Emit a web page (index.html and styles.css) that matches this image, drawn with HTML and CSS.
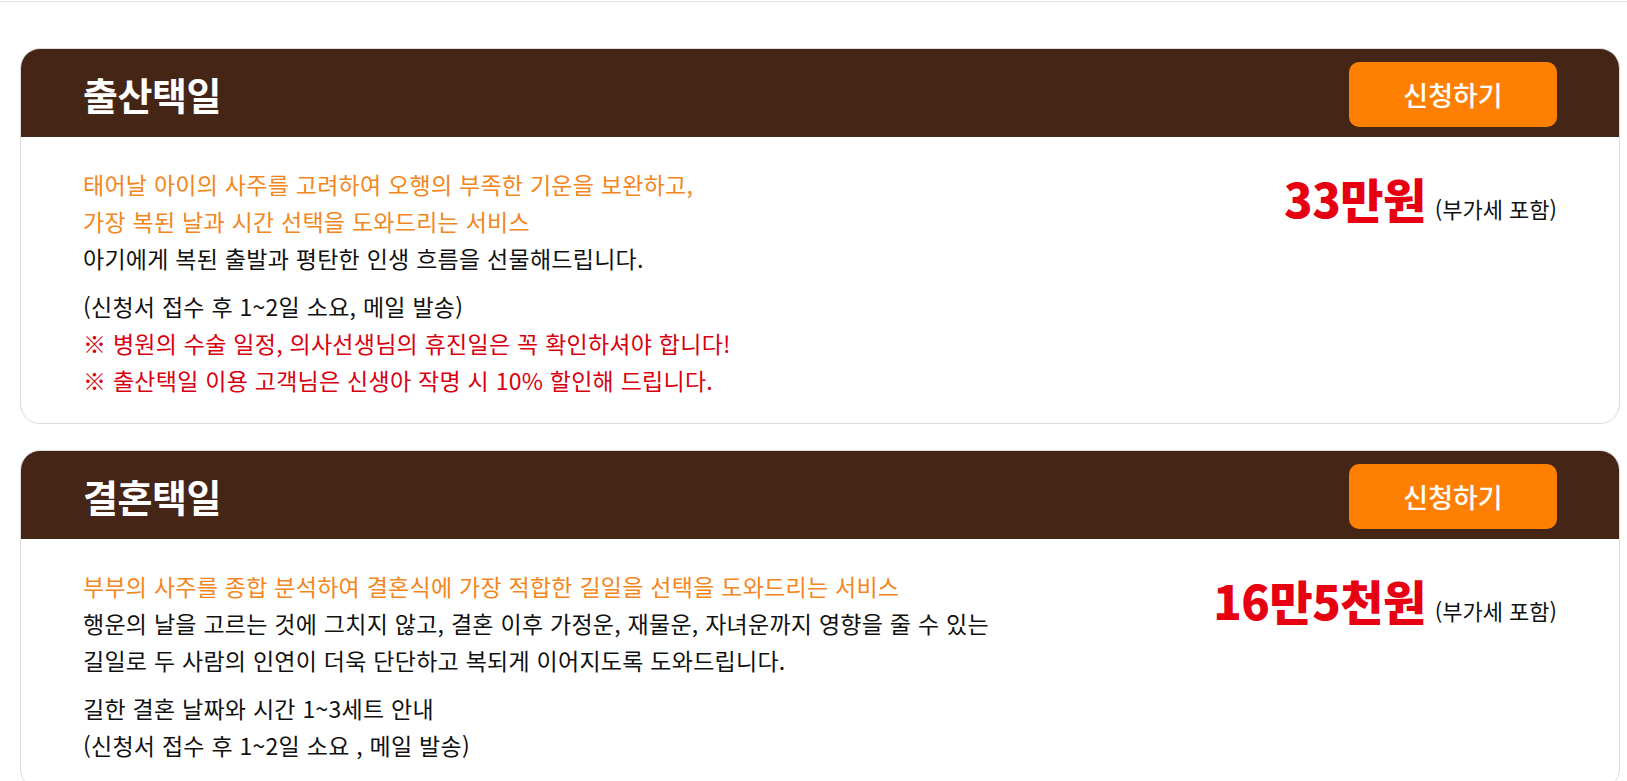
FILE: index.html
```html
<!DOCTYPE html>
<html lang="ko">
<head>
    <meta charset="UTF-8">
    <meta name="viewport" content="width=device-width,user-scalable=no">
    <title>택일 서비스</title>
    <link rel="stylesheet" href="styles.css">
</head>
<body>
    <div class="top-line"></div>
    <section class="wrap">
        <div class="item">
            <div class="item-head">
                <h2>출산택일</h2>
                <a href="javascript:;" class="btn">신청하기</a>
            </div>
            <div class="item-body">
                <div class="desc">
                    <p class="orange">태어날 아이의 사주를 고려하여 오행의 부족한 기운을 보완하고,<br>가장 복된 날과 시간 선택을 도와드리는 서비스</p>
                    <p>아기에게 복된 출발과 평탄한 인생 흐름을 선물해드립니다.</p>
                    <p class="gap">(신청서 접수 후 1~2일 소요, 메일 발송)</p>
                    <p class="red">※ 병원의 수술 일정, 의사선생님의 휴진일은 꼭 확인하셔야 합니다!</p>
                    <p class="red">※ 출산택일 이용 고객님은 신생아 작명 시 10% 할인해 드립니다.</p>
                </div>
                <div class="price"><strong>33만원</strong><span>(부가세 포함)</span></div>
            </div>
        </div>
        <div class="item">
            <div class="item-head">
                <h2>결혼택일</h2>
                <a href="javascript:;" class="btn">신청하기</a>
            </div>
            <div class="item-body">
                <div class="desc">
                    <p class="orange">부부의 사주를 종합 분석하여 결혼식에 가장 적합한 길일을 선택을 도와드리는 서비스</p>
                    <p>행운의 날을 고르는 것에 그치지 않고, 결혼 이후 가정운, 재물운, 자녀운까지 영향을 줄 수 있는<br>길일로 두 사람의 인연이 더욱 단단하고 복되게 이어지도록 도와드립니다.</p>
                    <p class="gap">길한 결혼 날짜와 시간 1~3세트 안내<br>(신청서 접수 후 1~2일 소요 , 메일 발송)</p>
                </div>
                <div class="price"><strong>16만5천원</strong><span>(부가세 포함)</span></div>
            </div>
        </div>
    </section>
</body>
</html>
```

FILE: styles.css
```css
body,html{
    margin:0;
    background:#fff;
    font-family:"Noto Sans CJK KR","Noto Sans",sans-serif;
    color:#111;
}
.top-line{
    height:1px;
    margin-top:1px;
    background:#e3e3e3;
}
.wrap{
    padding:46px 7px 0 20px;
}
.item{
    border:1px solid #dcdcdc;
    border-radius:20px;
    overflow:hidden;
    margin-bottom:26px;
}
.item-head{
    height:88px;
    padding:0 62px;
    background:#452515;
    display:flex;
    justify-content:space-between;
    align-items:center;
}
.item-head h2{
    margin:0;
    color:#fff;
    font-size:38px;
    font-weight:700;
    letter-spacing:-0.5px;
}
.btn{
    width:208px;
    height:65px;
    margin-top:3px;
    border-radius:10px;
    background:#ff7f00;
    color:#fff;
    font-size:27px;
    font-weight:500;
    text-decoration:none;
    display:flex;
    align-items:center;
    justify-content:center;
}
.item-body{
    padding:29px 62px 24px;
    display:flex;
    justify-content:space-between;
    align-items:flex-start;
}
.desc p{
    margin:0;
    font-size:23px;
    line-height:37px;
    letter-spacing:0.25px;
}
.desc p.gap{
    margin-top:11px;
}
.orange{
    color:#f3861c;
}
.red{
    color:#d8000f;
}
.price{
    margin-top:6px;
    display:flex;
    align-items:baseline;
    gap:9px;
}
.price strong{
    color:#e60012;
    font-size:47px;
    font-weight:900;
    line-height:52px;
    letter-spacing:-0.5px;
}
.price span{
    font-size:22px;
}
```
